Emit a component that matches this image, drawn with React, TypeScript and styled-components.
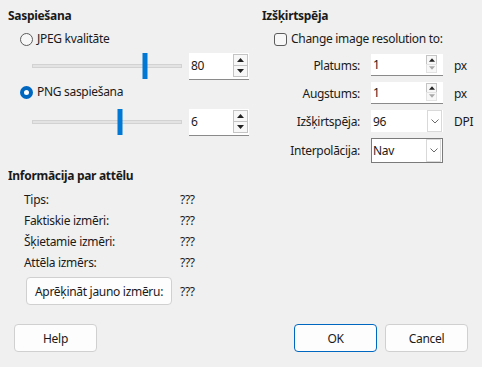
import React from 'react';
import styled, { createGlobalStyle } from 'styled-components';

const GlobalStyle = createGlobalStyle`
  html, body { margin: 0; padding: 0; background: #f0f0f0; }
  body {
    font-family: "Segoe UI", "Noto Sans", sans-serif;
    font-size: 12px;
    letter-spacing: -0.3px;
    color: #1a1a1a;
  }
`;

const Dialog = styled.div`
  width: 482px;
  height: 367px;
  box-sizing: border-box;
  background: #f0f0f0;
  display: flex;
  flex-direction: column;
  overflow: hidden;
`;

const TopArea = styled.div`
  display: grid;
  grid-template-columns: 254px 1fr;
  padding-top: 8px;
`;

const Column = styled.div<{ $left: number }>`
  padding-left: ${(p) => p.$left}px;
  display: flex;
  flex-direction: column;
`;

const Title = styled.div`
  font-weight: 700;
  line-height: 16px;
  height: 16px;
`;

const OptionRow = styled.label<{ $mt: number }>`
  display: flex;
  align-items: center;
  gap: 4px;
  height: 16px;
  line-height: 16px;
  margin-top: ${(p) => p.$mt}px;
  padding-left: 12px;
`;

const Radio = styled.span<{ $checked?: boolean }>`
  width: 13px;
  height: 13px;
  box-sizing: border-box;
  border-radius: 50%;
  flex: none;
  ${(p) =>
    p.$checked
      ? `border: 4px solid #0067c0; background: #fff;`
      : `border: 1px solid #5c5c5c; background: #f7f7f7;`}
`;

const Checkbox = styled.span`
  width: 13px;
  height: 13px;
  box-sizing: border-box;
  border: 1px solid #5c5c5c;
  border-radius: 3px;
  background: #f7f7f7;
  flex: none;
`;

const SliderRow = styled.div<{ $mt: number }>`
  display: flex;
  align-items: center;
  height: 28px;
  margin-top: ${(p) => p.$mt}px;
  padding-left: 24px;
`;

const Track = styled.div`
  position: relative;
  width: 150px;
  height: 4px;
  box-sizing: border-box;
  background: #e3e3e3;
  border: 1px solid #d2d2d2;
  margin-right: 7px;
`;

const Thumb = styled.div`
  position: absolute;
  top: -12px;
  width: 5px;
  height: 26px;
  background: #0078d4;
  transform: translateX(-50%);
`;

const SpinBox = styled.div<{ $w: number; $h: number }>`
  position: relative;
  width: ${(p) => p.$w}px;
  height: ${(p) => p.$h}px;
  box-sizing: border-box;
  background: #fff;
  border-bottom: 1px solid #8a8a8a;
  display: flex;
  align-items: center;
  padding-left: 2px;
`;

const SpinButtons = styled.div<{ $w: number; $right: number }>`
  position: absolute;
  right: ${(p) => p.$right}px;
  top: 1px;
  bottom: 2px;
  width: ${(p) => p.$w}px;
  display: flex;
  flex-direction: column;
`;

const SpinButton = styled.div<{ $disabled?: boolean }>`
  flex: 1;
  box-sizing: border-box;
  border: 1px solid ${(p) => (p.$disabled ? '#e2e2e2' : '#c4c4c4')};
  background: #f7f7f7;
  display: flex;
  align-items: center;
  justify-content: center;
  color: ${(p) => (p.$disabled ? '#a8a8a8' : '#222')};
  & + & { margin-top: -1px; }
`;

const FormGrid = styled.div`
  display: grid;
  grid-template-columns: 98px 72px auto;
  column-gap: 11px;
  row-gap: 6px;
  margin-top: 7px;
  align-items: center;
`;

const FieldLabel = styled.div`
  text-align: right;
`;

const Unit = styled.div``;

const Combo = styled.div<{ $framed?: boolean }>`
  position: relative;
  height: ${(p) => (p.$framed ? 25 : 22)}px;
  box-sizing: border-box;
  background: #fff;
  border: ${(p) => (p.$framed ? '1px solid #7a7a7a' : 'none')};
  display: flex;
  align-items: center;
  padding-left: ${(p) => (p.$framed ? 1 : 2)}px;
`;

const ComboButton = styled.div`
  position: absolute;
  right: 1px;
  top: 0;
  bottom: 0;
  width: 15px;
  box-sizing: border-box;
  border: 1px solid #d9d9d9;
  background: #fff;
  display: flex;
  align-items: center;
  justify-content: center;
`;

const InfoSection = styled.div`
  padding-left: 8px;
  margin-top: 5px;
  display: flex;
  flex-direction: column;
`;

const InfoList = styled.div`
  margin-top: 5px;
`;

const InfoRow = styled.div`
  display: grid;
  grid-template-columns: 156px auto;
  height: 21px;
  line-height: 21px;
  padding-left: 16px;
`;

const InfoButtonRow = styled.div`
  display: flex;
  align-items: center;
  gap: 8px;
  margin-top: 4px;
  padding-left: 18px;
`;

const Button = styled.button<{ $w: number; $primary?: boolean }>`
  width: ${(p) => p.$w}px;
  height: 28px;
  box-sizing: border-box;
  border-radius: 4px;
  border: 1px solid ${(p) => (p.$primary ? '#0067c0' : '#d0d0d0')};
  background: #fdfdfd;
  font: inherit;
  letter-spacing: inherit;
  color: #1a1a1a;
  padding: 0;
`;

const Footer = styled.div`
  display: flex;
  justify-content: space-between;
  padding: 0 14px;
  margin-top: 19px;
`;

const ButtonGroup = styled.div`
  display: flex;
  gap: 8px;
`;

const UpArrow = ({ size = 7 }: { size?: number }) => (
  <svg width={size} height={4} viewBox="0 0 7 4">
    <path d="M0 4 L3.5 0 L7 4 Z" fill="currentColor" />
  </svg>
);

const DownArrow = ({ size = 7 }: { size?: number }) => (
  <svg width={size} height={4} viewBox="0 0 7 4">
    <path d="M0 0 L3.5 4 L7 0 Z" fill="currentColor" />
  </svg>
);

const Chevron = () => (
  <svg width="8" height="5" viewBox="0 0 8 5">
    <path d="M0.5 0.5 L4 4 L7.5 0.5" fill="none" stroke="#6a6a6a" strokeWidth="1" />
  </svg>
);

const QualitySlider: React.FC<{ pos: number; value: string; mt: number }> = ({ pos, value, mt }) => (
  <SliderRow $mt={mt}>
    <Track>
      <Thumb style={{ left: `${pos}%` }} />
    </Track>
    <SpinBox $w={60} $h={27}>
      {value}
      <SpinButtons $w={15} $right={1}>
        <SpinButton><UpArrow /></SpinButton>
        <SpinButton><DownArrow /></SpinButton>
      </SpinButtons>
    </SpinBox>
  </SliderRow>
);

const SmallSpin: React.FC<{ value: string }> = ({ value }) => (
  <SpinBox $w={72} $h={22}>
    {value}
    <SpinButtons $w={11} $right={6}>
      <SpinButton><UpArrow size={6} /></SpinButton>
      <SpinButton $disabled><DownArrow size={6} /></SpinButton>
    </SpinButtons>
  </SpinBox>
);

const info = [
  ['Tips:', '???'],
  ['Faktiskie izmēri:', '???'],
  ['Šķietamie izmēri:', '???'],
  ['Attēla izmērs:', '???'],
];

export default function App() {
  return (
    <Dialog>
      <GlobalStyle />
      <TopArea>
        <Column $left={8}>
          <Title>Saspiešana</Title>
          <OptionRow $mt={7}>
            <Radio />
            JPEG kvalitāte
          </OptionRow>
          <QualitySlider pos={76} value="80" mt={5} />
          <OptionRow $mt={4}>
            <Radio $checked />
            PNG saspiešana
          </OptionRow>
          <QualitySlider pos={59} value="6" mt={8} />
        </Column>
        <Column $left={8}>
          <Title>Izšķirtspēja</Title>
          <OptionRow $mt={7}>
            <Checkbox />
            Change image resolution to:
          </OptionRow>
          <FormGrid>
            <FieldLabel>Platums:</FieldLabel>
            <SmallSpin value="1" />
            <Unit>px</Unit>
            <FieldLabel>Augstums:</FieldLabel>
            <SmallSpin value="1" />
            <Unit>px</Unit>
            <FieldLabel>Izšķirtspēja:</FieldLabel>
            <Combo>
              96
              <ComboButton><Chevron /></ComboButton>
            </Combo>
            <Unit>DPI</Unit>
            <FieldLabel>Interpolācija:</FieldLabel>
            <Combo $framed>
              Nav
              <ComboButton><Chevron /></ComboButton>
            </Combo>
            <Unit />
          </FormGrid>
        </Column>
      </TopArea>
      <InfoSection>
        <Title>Informācija par attēlu</Title>
        <InfoList>
          {info.map(([k, v]) => (
            <InfoRow key={k}>
              <span>{k}</span>
              <span>{v}</span>
            </InfoRow>
          ))}
        </InfoList>
        <InfoButtonRow>
          <Button $w={146}>Aprēķināt jauno izmēru:</Button>
          <span>???</span>
        </InfoButtonRow>
      </InfoSection>
      <Footer>
        <Button $w={83}>Help</Button>
        <ButtonGroup>
          <Button $w={83} $primary>OK</Button>
          <Button $w={83}>Cancel</Button>
        </ButtonGroup>
      </Footer>
    </Dialog>
  );
}
